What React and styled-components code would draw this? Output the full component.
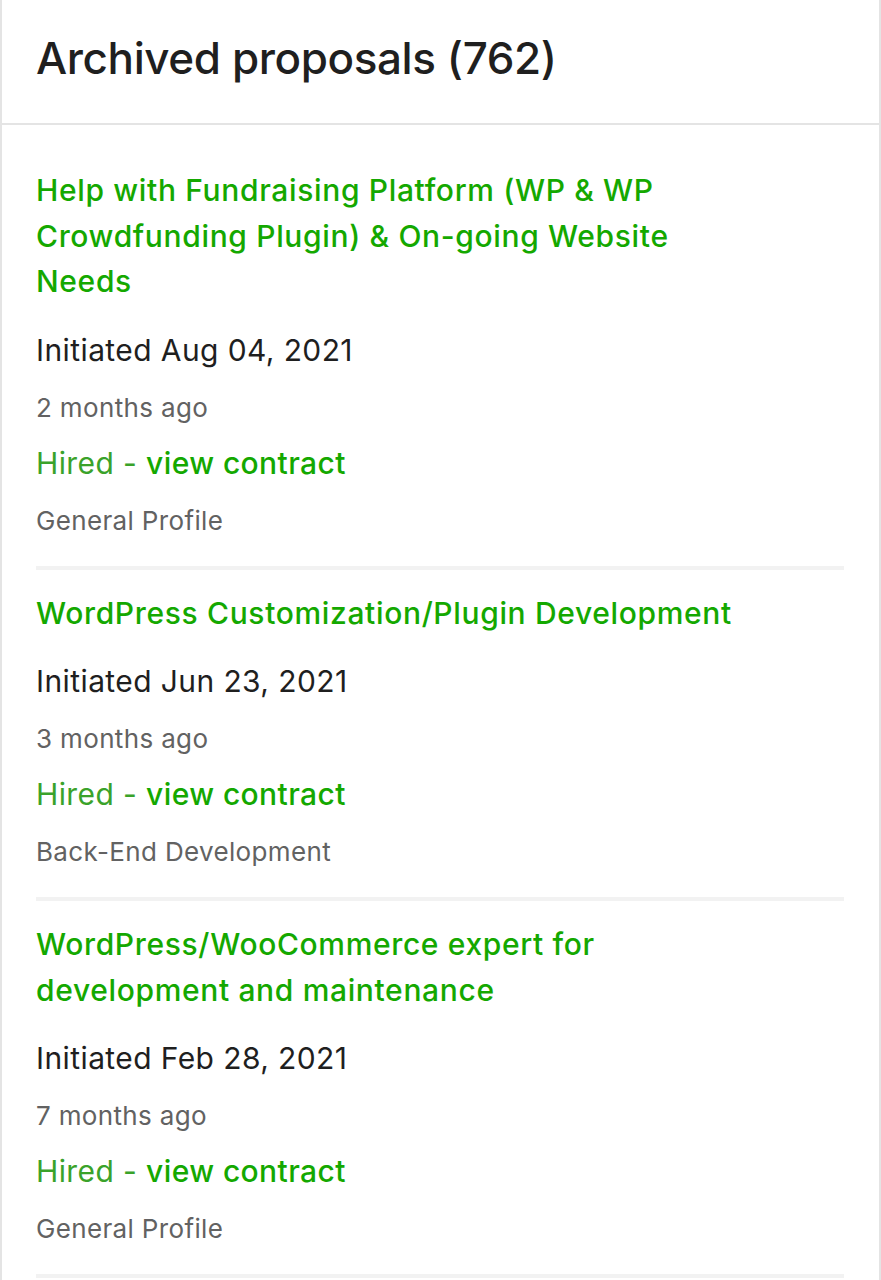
import React from 'react';
import styled, { createGlobalStyle } from 'styled-components';

const GlobalStyle = createGlobalStyle`
  body {
    margin: 0;
    background: #ffffff;
    font-family: Inter, "Liberation Sans", Arial, sans-serif;
    -webkit-font-smoothing: antialiased;
  }
`;

const Panel = styled.section`
  border-left: 2px solid #e4e4e4;
  border-right: 2px solid #e4e4e4;
  min-height: 1280px;
  box-sizing: border-box;
`;

const Header = styled.header`
  padding: 30px 36px 37px 34px;
  border-bottom: 2px solid #e4e4e4;
`;

const Heading = styled.h1`
  margin: 0;
  font-size: 44px;
  line-height: 56px;
  font-weight: 500;
  color: #1f1f1f;
  letter-spacing: -0.4px;
`;

const List = styled.div`
  padding: 43px 34px 0;
`;

const Item = styled.article`
  display: flex;
  flex-direction: column;
  padding-top: ${p => (p.first ? '0' : '21px')};
  padding-bottom: 27px;
  border-bottom: 4px solid #f2f2f2;
  margin-right: 1px;
`;

const Title = styled.a`
  display: block;
  max-width: 712px;
  font-size: 30px;
  line-height: 45.5px;
  font-weight: 500;
  letter-spacing: 0.65px;
  color: #14a800;
  text-decoration: none;
`;

const Initiated = styled.div`
  margin-top: 25px;
  font-size: 30px;
  line-height: 40px;
  letter-spacing: 0.4px;
  color: #1f1f1f;
`;

const Meta = styled.div`
  margin-top: 20px;
  font-size: 26px;
  line-height: 36px;
  letter-spacing: 0.35px;
  color: #626262;
`;

const Status = styled.div`
  margin-top: 17px;
  font-size: 30px;
  line-height: 40px;
  letter-spacing: 0.4px;
  color: #3aa22a;
`;

const ContractLink = styled.a`
  color: #14a800;
  font-weight: 500;
  text-decoration: none;
`;

const proposals = [
  {
    title: 'Help with Fundraising Platform (WP & WP Crowdfunding Plugin) & On-going Website Needs',
    date: 'Aug 04, 2021',
    ago: '2 months ago',
    profile: 'General Profile',
  },
  {
    title: 'WordPress Customization/Plugin Development',
    date: 'Jun 23, 2021',
    ago: '3 months ago',
    profile: 'Back-End Development',
  },
  {
    title: 'WordPress/WooCommerce expert for development and maintenance',
    date: 'Feb 28, 2021',
    ago: '7 months ago',
    profile: 'General Profile',
  },
];

export default function App() {
  return (
    <>
      <GlobalStyle />
      <Panel>
        <Header>
          <Heading>Archived proposals (762)</Heading>
        </Header>
        <List>
          {proposals.map((p, i) => (
            <Item key={i} first={i === 0}>
              <Title href="#">{p.title}</Title>
              <Initiated>Initiated {p.date}</Initiated>
              <Meta>{p.ago}</Meta>
              <Status>
                Hired - <ContractLink href="#">view contract</ContractLink>
              </Status>
              <Meta>{p.profile}</Meta>
            </Item>
          ))}
        </List>
      </Panel>
    </>
  );
}
